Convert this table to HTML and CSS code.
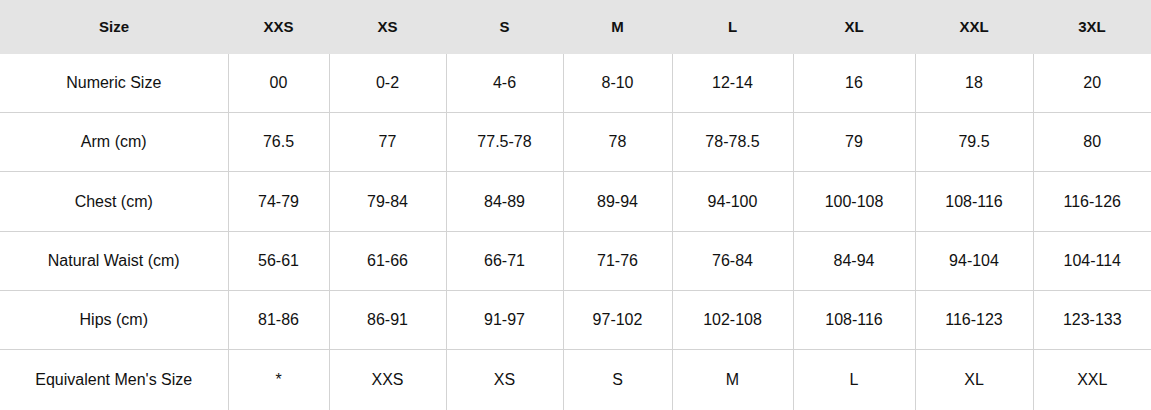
FILE: index.html
```html
<!DOCTYPE html>
<html>
<head>
<meta charset="utf-8">
<link rel="stylesheet" href="styles.css">
</head>
<body>
<table class="size-table">
  <colgroup>
    <col><col><col><col><col><col><col><col><col>
  </colgroup>
  <thead>
    <tr><th>Size</th><th>XXS</th><th>XS</th><th>S</th><th>M</th><th>L</th><th>XL</th><th>XXL</th><th>3XL</th></tr>
  </thead>
  <tbody>
    <tr><td>Numeric Size</td><td>00</td><td>0-2</td><td>4-6</td><td>8-10</td><td>12-14</td><td>16</td><td>18</td><td>20</td></tr>
    <tr><td>Arm (cm)</td><td>76.5</td><td>77</td><td>77.5-78</td><td>78</td><td>78-78.5</td><td>79</td><td>79.5</td><td>80</td></tr>
    <tr class="tall"><td>Chest (cm)</td><td>74-79</td><td>79-84</td><td>84-89</td><td>89-94</td><td>94-100</td><td>100-108</td><td>108-116</td><td>116-126</td></tr>
    <tr><td>Natural Waist (cm)</td><td>56-61</td><td>61-66</td><td>66-71</td><td>71-76</td><td>76-84</td><td>84-94</td><td>94-104</td><td>104-114</td></tr>
    <tr><td>Hips (cm)</td><td>81-86</td><td>86-91</td><td>91-97</td><td>97-102</td><td>102-108</td><td>108-116</td><td>116-123</td><td>123-133</td></tr>
    <tr class="last"><td>Equivalent Men's Size</td><td>*</td><td>XXS</td><td>XS</td><td>S</td><td>M</td><td>L</td><td>XL</td><td>XXL</td></tr>
  </tbody>
</table>
</body>
</html>
```
FILE: styles.css
```css
html, body {
  margin: 0;
  padding: 0;
  background: #ffffff;
}
.size-table {
  width: 1151px;
  border-collapse: collapse;
  table-layout: fixed;
  font-family: "Liberation Sans", Arial, sans-serif;
  color: #111111;
}
.size-table col:nth-child(1) { width: 228px; }
.size-table col:nth-child(2) { width: 101px; }
.size-table col:nth-child(3) { width: 117px; }
.size-table col:nth-child(4) { width: 117px; }
.size-table col:nth-child(5) { width: 109px; }
.size-table col:nth-child(6) { width: 121px; }
.size-table col:nth-child(7) { width: 122px; }
.size-table col:nth-child(8) { width: 118px; }
.size-table col:nth-child(9) { width: 118px; }
.size-table th {
  background: #e4e4e4;
  height: 52px;
  padding: 0 0 2px;
  font-size: 15px;
  font-weight: bold;
  text-align: center;
  vertical-align: middle;
  border: none;
}
.size-table td {
  height: 58px;
  padding: 0;
  font-size: 16px;
  text-align: center;
  vertical-align: middle;
  border-left: 1px solid #d3d3d3;
  border-bottom: 1px solid #d3d3d3;
}
.size-table td:first-child {
  border-left: none;
}
.size-table tr.tall td {
  height: 59px;
}
.size-table tr.last td {
  height: 60px;
  border-bottom: none;
}
```
